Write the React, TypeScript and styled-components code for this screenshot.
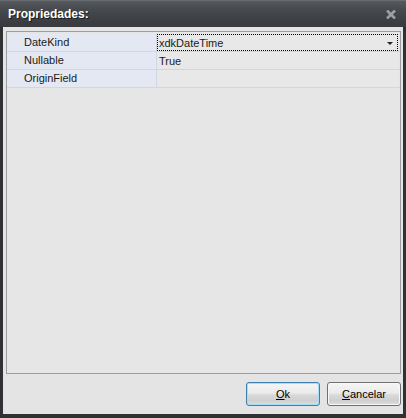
import React from 'react';
import styled, { createGlobalStyle } from 'styled-components';

const GlobalStyle = createGlobalStyle`
  html, body {
    margin: 0;
    padding: 0;
    background: #2e3034;
  }
  body {
    font-family: "Liberation Sans", Arial, sans-serif;
  }
`;

const Window = styled.div`
  width: 406px;
  height: 418px;
  box-sizing: border-box;
  display: flex;
  flex-direction: column;
  background: #2f3135;
  padding-bottom: 4px;
`;

const TitleBar = styled.div`
  height: 27px;
  flex: none;
  box-sizing: border-box;
  display: flex;
  align-items: center;
  justify-content: space-between;
  padding: 0 10px 0 8px;
  border-top: 1px solid #686b70;
  background: linear-gradient(#56595e 0px, #474a4e 8px, #3b3e42 20px, #37393d 27px);
`;

const Title = styled.span`
  color: #ffffff;
  font-size: 12px;
  font-weight: bold;
  text-shadow: 1px 1px 0 #1c1d20;
`;

const Body = styled.div`
  flex: 1;
  margin: 0 3px;
  background: #e4e4e4;
  display: flex;
  flex-direction: column;
  padding: 4px 2px 8px 3px;
  min-height: 0;
`;

const Panel = styled.div`
  flex: 1;
  border: 1px solid #9d9d9d;
  background: #e6e6e6;
  padding-top: 2px;
`;

const Row = styled.div`
  display: flex;
  height: 18px;
  box-sizing: border-box;
  border-bottom: 1px solid #d0d6e3;
  font-size: 11px;
  color: #1a1a1a;
`;

const LabelCell = styled.div`
  width: 150px;
  flex: none;
  box-sizing: border-box;
  background: #e4e8f3;
  border-right: 1px solid #d0d6e3;
  padding-left: 17px;
  line-height: 17px;
`;

const ValueCell = styled.div<{ $focused?: boolean }>`
  flex: 1;
  display: flex;
  align-items: center;
  justify-content: space-between;
  padding: 0 5px 0 2px;
  margin-right: 2px;
  background: #e8e8e8;
  outline: ${(p) => (p.$focused ? '1px dotted #000' : 'none')};
  outline-offset: -1px;
`;

const Arrow = styled.span`
  width: 0;
  height: 0;
  border-left: 3px solid transparent;
  border-right: 3px solid transparent;
  border-top: 3px solid #222;
  margin-top: 1px;
`;

const Footer = styled.div`
  display: flex;
  justify-content: flex-end;
  gap: 7px;
  margin-top: 8px;
`;

const DialogButton = styled.button<{ $default?: boolean }>`
  width: 74px;
  height: 24px;
  box-sizing: border-box;
  border-radius: 3px;
  font-family: "Liberation Sans", Arial, sans-serif;
  font-size: 11px;
  color: #000;
  padding: 0;
  border: 1px solid ${(p) => (p.$default ? '#3c7fb1' : '#707070')};
  box-shadow: inset 0 0 0 1px ${(p) => (p.$default ? '#a6dcf7' : '#f8f8f8')};
  background: linear-gradient(#f5f5f5 0%, #ebebeb 45%, #d9d9d9 55%, #cfcfcf 80%, #dedede 100%);
`;

const CloseIcon = () => (
  <svg width="10" height="9" viewBox="0 0 10 9">
    <path d="M1 0.5 L9 8.5 M9 0.5 L1 8.5" stroke="#9da1a6" strokeWidth="2.6" />
  </svg>
);

const rows = [
  { label: 'DateKind', value: 'xdkDateTime', focused: true, dropdown: true },
  { label: 'Nullable', value: 'True' },
  { label: 'OriginField', value: '' },
];

export default function App() {
  return (
    <>
      <GlobalStyle />
      <Window>
        <TitleBar>
          <Title>Propriedades:</Title>
          <CloseIcon />
        </TitleBar>
        <Body>
          <Panel>
            {rows.map((r) => (
              <Row key={r.label}>
                <LabelCell>{r.label}</LabelCell>
                <ValueCell $focused={r.focused}>
                  <span>{r.value}</span>
                  {r.dropdown && <Arrow />}
                </ValueCell>
              </Row>
            ))}
          </Panel>
          <Footer>
            <DialogButton $default>
              <u>O</u>k
            </DialogButton>
            <DialogButton>
              <u>C</u>ancelar
            </DialogButton>
          </Footer>
        </Body>
      </Window>
    </>
  );
}
